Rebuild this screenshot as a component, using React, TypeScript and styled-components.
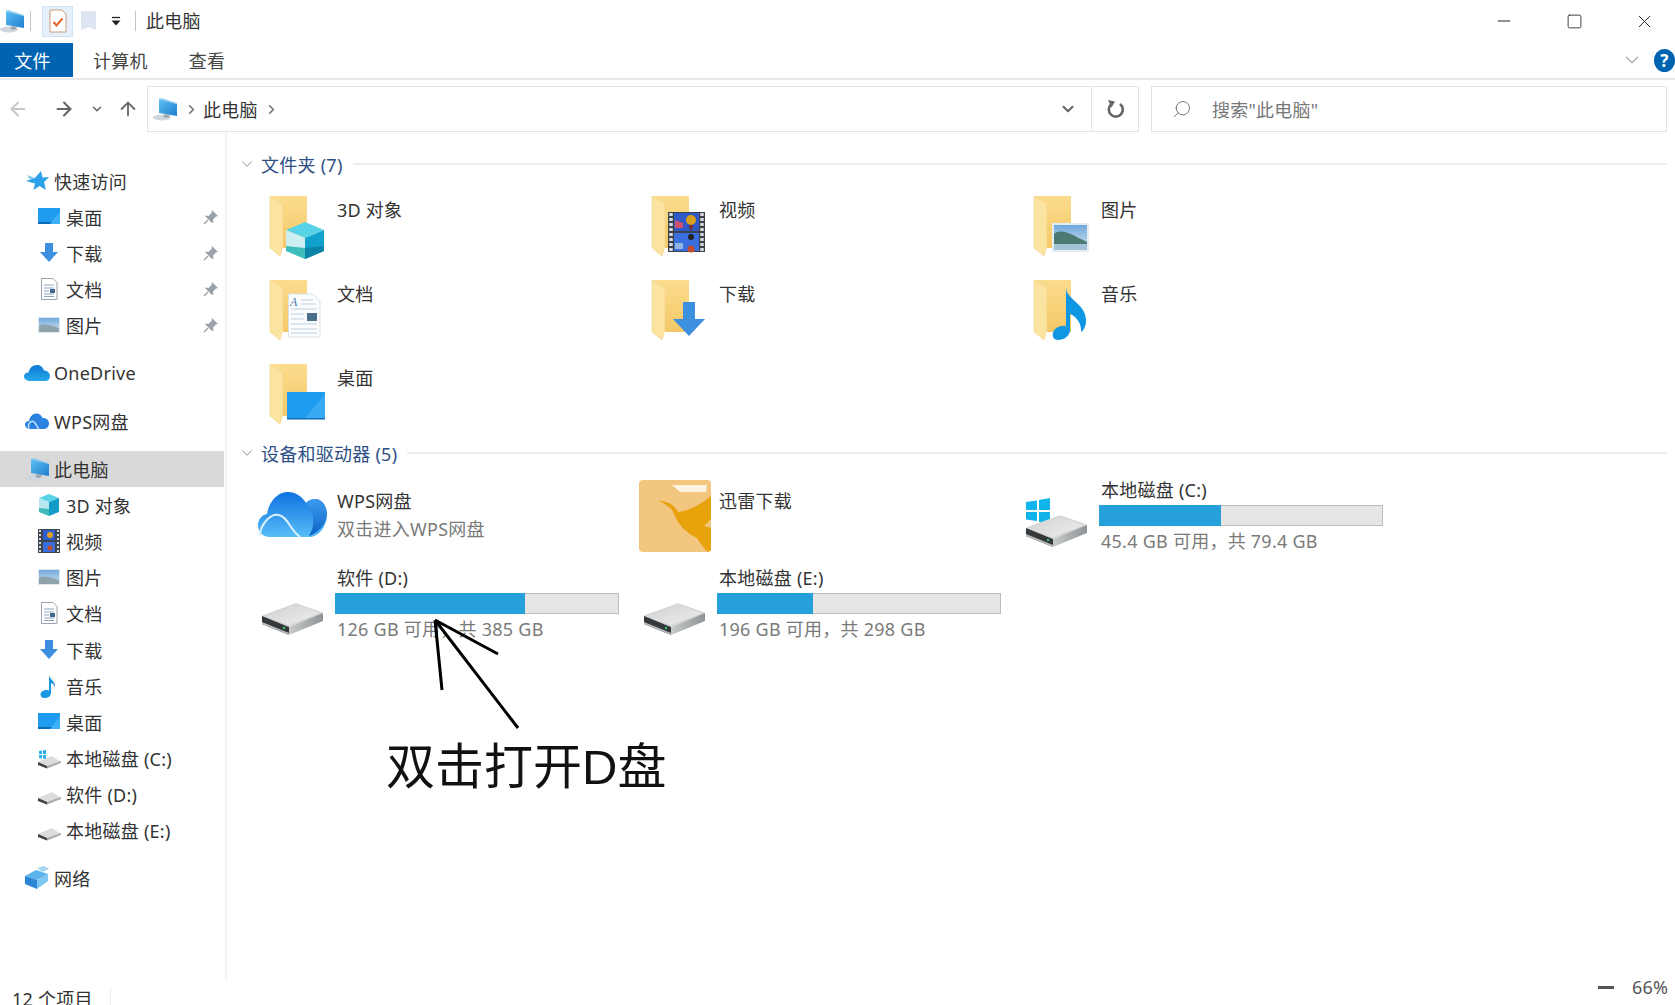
import React from 'react'
import styled, { createGlobalStyle } from 'styled-components'
import { ChevronDown, ChevronRight, ArrowLeft, ArrowRight, ArrowUp, Search, Minus, Square, X } from 'lucide-react'

const GlobalStyle = createGlobalStyle`
  html, body {
    margin: 0;
    padding: 0;
    background: #fff;
    overflow: hidden;
  }
  body {
    font-family: "Noto Sans", "Noto Sans CJK SC", sans-serif;
    font-size: 18px;
    letter-spacing: 0.25px;
    color: #333;
  }
`

const Page = styled.div`
  position: relative;
  width: 1675px;
  height: 1005px;
  display: flex;
  flex-direction: column;
  overflow: hidden;
  background: #fff;
`

const Defs = styled.svg`
  display: block;
  width: 0;
  height: 0;
`

/* title bar */
const TitleBar = styled.div`
  height: 42px;
  display: flex;
  align-items: center;
  flex-shrink: 0;
  margin-right: -4px;
`

const QuickTools = styled.div`
  display: flex;
  align-items: center;
  width: 146px;
  height: 100%;
`

const ToolSep = styled.span<{ $left: number }>`
  width: 1px;
  height: 20px;
  background: #c4c4c4;
  margin-left: ${(p) => p.$left}px;
`

const CheckTool = styled.span`
  display: flex;
  align-items: center;
  justify-content: center;
  width: 31px;
  height: 31px;
  margin-left: 11px;
  background: #e6f0fa;
  border: 1px solid #cfe3f5;
  box-sizing: border-box;
`

const TitleText = styled.span`
  flex: 1;
  font-size: 18px;
  line-height: 24px;
  color: #333;
`

const WindowButton = styled.span<{ $width: number }>`
  display: flex;
  align-items: center;
  justify-content: center;
  width: ${(p) => p.$width}px;
  color: #222;
`

/* ribbon */
const Ribbon = styled.div`
  height: 38px;
  display: flex;
  align-items: flex-start;
  border-bottom: 2px solid #e9e9e9;
  box-sizing: border-box;
  flex-shrink: 0;
  padding-top: 1px;
`

const FileTab = styled.div`
  width: 73px;
  height: 34px;
  padding-right: 8px;
  box-sizing: border-box;
  background: #0063b1;
  color: #fff;
  display: flex;
  align-items: center;
  justify-content: center;
  font-size: 18px;
`

const RibbonTab = styled.div<{ $left: number }>`
  height: 34px;
  margin-left: ${(p) => p.$left}px;
  display: flex;
  align-items: center;
  font-size: 18px;
  color: #444;
`

const RibbonEnd = styled.div`
  margin-left: auto;
  display: flex;
  align-items: center;
  height: 34px;
  gap: 11px;
  color: #a9a9a9;
`

const HelpBadge = styled.span`
  width: 21px;
  height: 23px;
  border-radius: 50%;
  background: #0063b1;
  color: #fff;
  font-size: 17px;
  font-weight: 700;
  display: flex;
  align-items: center;
  justify-content: center;
  line-height: 1;
`

/* address row */
const AddressRow = styled.div`
  height: 46px;
  margin-top: 6px;
  display: flex;
  align-items: stretch;
  flex-shrink: 0;
  padding-right: 8px;
`

const NavButtons = styled.div`
  width: 147px;
  display: flex;
  align-items: center;
  flex-shrink: 0;
`

const NavButton = styled.span<{ $left: number; $dim?: boolean }>`
  display: flex;
  margin-left: ${(p) => p.$left}px;
  color: ${(p) => (p.$dim ? '#c8c8c8' : '#666')};
`

const AddressBox = styled.div`
  flex: 1;
  display: flex;
  align-items: center;
  border: 1px solid #e3e3e3;
  box-sizing: border-box;
  font-size: 18px;
  color: #333;
`

const Crumb = styled.span`
  margin: 0 6px 0 4px;
`

const CrumbArrow = styled.span<{ $left: number }>`
  display: flex;
  margin-left: ${(p) => p.$left}px;
  color: #777;
`

const AddressEnd = styled.span`
  margin-left: auto;
  width: 46px;
  display: flex;
  align-items: center;
  justify-content: center;
  height: 100%;
  color: #666;
`

const RefreshCell = styled(AddressEnd)`
  margin-left: 0;
  border-left: 1px solid #e3e3e3;
`

const SearchBox = styled.div`
  width: 516px;
  margin-left: 12px;
  display: flex;
  align-items: center;
  border: 1px solid #e3e3e3;
  box-sizing: border-box;
  color: #777;
  font-size: 18px;
  padding-left: 20px;
  gap: 20px;
`

/* body */
const Body = styled.div`
  flex: 1;
  display: flex;
  min-height: 0;
`

const Sidebar = styled.nav`
  width: 227px;
  height: 848px;
  box-sizing: border-box;
  padding-top: 31px;
  border-right: 2px solid #f3f3f3;
  flex-shrink: 0;
`

const NavGroup = styled.div`
  margin-bottom: 11.8px;
`

const NavRow = styled.div<{ $level: number; $selected?: boolean }>`
  height: 36.1px;
  width: 224px;
  display: flex;
  align-items: center;
  box-sizing: border-box;
  padding-left: ${(p) => (p.$level === 0 ? 24 : 36)}px;
  background: ${(p) => (p.$selected ? '#d9d9d9' : 'transparent')};
  font-size: 18px;
  color: #333;
`

const NavIcon = styled.span`
  display: flex;
  align-items: center;
  justify-content: center;
  width: 26px;
  margin-right: 4px;
  flex-shrink: 0;
`

const Pin = styled.span`
  margin-left: auto;
  margin-right: 5px;
  display: flex;
`

const Main = styled.main`
  flex: 1;
  padding: 18px 8px 0 36px;
  min-width: 0;
`

const GroupHeader = styled.div<{ $after: number }>`
  height: 28px;
  display: flex;
  align-items: center;
  color: #2d4f86;
  font-size: 18px;
  margin-bottom: ${(p) => p.$after}px;
  margin-left: -25px;
  &::after {
    content: '';
    flex: 1;
    height: 2px;
    background: #ececec;
    margin-left: 10px;
  }
`

const GroupChevron = styled.span`
  display: flex;
  width: 18px;
  color: #8a8a8a;
  margin-right: 5px;
`

const FolderGrid = styled.div`
  display: grid;
  grid-template-columns: repeat(3, 382px);
  grid-auto-rows: 68px;
  row-gap: 16px;
  margin-left: -1px;
  margin-bottom: 7px;
`

const DriveGrid = styled.div`
  display: grid;
  grid-template-columns: repeat(3, 382px);
  grid-auto-rows: 88px;
  margin-left: -1px;
`

const Tile = styled.div`
  display: flex;
  align-items: flex-start;
`

const TileArt = styled.svg`
  width: 73px;
  height: 80px;
  overflow: visible;
  flex-shrink: 0;
`

const FolderLabel = styled.div`
  padding: 2px 0 0 2px;
  font-size: 18px;
  line-height: 24px;
  color: #333;
`

const DriveInfo = styled.div<{ $top?: number }>`
  padding-top: ${(p) => p.$top ?? 0}px;
  width: 284px;
`

const DriveName = styled.div`
  padding-left: 2px;
  font-size: 18px;
  line-height: 24px;
  color: #333;
`

const DriveSub = styled.div<{ $top: number }>`
  padding-left: 2px;
  margin-top: ${(p) => p.$top}px;
  font-size: 18px;
  line-height: 24px;
  color: #7a7a7a;
  white-space: nowrap;
`

const Bar = styled.div`
  height: 21px;
  margin-top: 3px;
  background: #e6e6e6;
  box-shadow: inset 0 0 0 1px #bcbcbc;
`

const BarFill = styled.div`
  height: 100%;
  background: #26a0da;
`

/* status + overlays */
const StatusBar = styled.div`
  position: absolute;
  left: 12px;
  bottom: -6px;
  height: 24px;
  line-height: 24px;
  font-size: 18px;
  color: #333;
  display: flex;
  &::after {
    content: '';
    width: 1px;
    height: 24px;
    background: #eee;
    margin-left: 17px;
  }
`

const ZoomBadge = styled.div`
  position: absolute;
  left: 1598px;
  top: 975px;
  display: flex;
  align-items: center;
  height: 24px;
  gap: 18px;
  color: #555;
  font-size: 18px;
`

const ZoomMinus = styled.span`
  width: 16px;
  height: 3px;
  background: #555;
`

const ArrowMark = styled.svg`
  position: absolute;
  left: 430px;
  top: 615px;
  width: 100px;
  height: 120px;
`

const Annotation = styled.div`
  position: absolute;
  left: 386px;
  top: 731px;
  font-size: 49px;
  line-height: 72px;
  letter-spacing: 0;
  color: #111;
  font-family: "Liberation Sans", "Noto Sans CJK SC", sans-serif;
  white-space: nowrap;
`

/* drawings */
const Pc = ({ size = 24 }: { size?: number }) => (
  <svg width={size} height={size} viewBox="0 0 24 24">
    <ellipse cx="9" cy="20.5" rx="9" ry="3" fill="#cfd6dc" />
    <polygon points="6,2 24,7 24,19 6,16" fill="url(#pcScreen)" />
    <polygon points="6,2 8,1 24,6 24,7" fill="#8cc8ee" />
    <polygon points="12,17 17,18 15,21 10,20" fill="#9aa6b0" />
  </svg>
)

const Star = () => (
  <svg width="24" height="24" viewBox="0 0 24 24">
    <polygon points="16,2 17.500,8.500 24,8 19,13 21,21 14.500,17 8.500,21 10,14.500 1,12 10,9" fill="#2ba1e8" />
    <polygon points="2,6 10,9 5,10.500" fill="#7cc7f2" />
  </svg>
)

const DesktopSmall = () => (
  <svg width="22" height="18" viewBox="0 0 22 18">
    <rect width="22" height="16" fill="#1f9bf0" />
    <rect y="14" width="22" height="2" fill="#0b6cb5" />
    <polygon points="12,16 22,4 22,16" fill="#3fb0f7" />
  </svg>
)

const DownSmall = () => (
  <svg width="20" height="20" viewBox="0 0 20 20">
    <polygon points="6,0 14,0 14,9 19,9 10,19 1,9 6,9" fill="#3d8fe0" />
  </svg>
)

const DocSmall = () => (
  <svg width="18" height="22" viewBox="0 0 18 22">
    <path d="M1.5 .5H13L17 4.500V21.500H1.500Z" fill="#fff" stroke="#9aa3ad" />
    <path d="M4 7h10M4 10h10M4 13h5M4 16h10M4 18.500h10" stroke="#8fa6bf" />
    <rect x="10" y="11" width="5" height="4" fill="#41688f" />
  </svg>
)

const PicSmall = () => (
  <svg width="22" height="16" viewBox="0 0 22 16">
    <rect width="22" height="16" fill="#dfe7ef" />
    <rect x="1" y="1" width="20" height="14" fill="url(#picSky)" />
    <path d="M1 9C6 6 12 8 21 11V15H1Z" fill="#8fa3ad" />
  </svg>
)

const Cloud = () => (
  <svg width="26" height="18" viewBox="0 0 26 18">
    <path d="M6 17C2 17 0 14.500 0 12.500C0 10 2 8.500 4.500 8.500C5.500 4 8.500 1 13 1C17 1 19 3.500 20 6.500C23.500 6.500 26 9 26 12C26 15 24 17 21 17Z" fill="url(#oneDrive)" />
  </svg>
)

const WpsSmall = () => (
  <svg width="24" height="18" viewBox="0 0 24 18">
    <path d="M5 17C2 17 0 15 0 12.500C0 10.500 2 9 4 9C5 4 8 1.500 11.500 1.500C14.500 1.500 16.500 3.500 17.500 6C21 5.500 24 8 24 11.500C24 15 21.500 17 18.500 17Z" fill="#2a83e0" />
    <path d="M4 17C2 13 5 8.500 8.500 9.500C11 10.500 11 14 14 17" fill="none" stroke="#bfe0fa" strokeWidth="1.500" />
  </svg>
)

const CubeSmall = () => (
  <svg width="24" height="24" viewBox="0 0 24 24">
    <polygon points="12,1 22,5 12,9 2,5" fill="#58d2e6" />
    <polygon points="2,5 12,9 12,23 2,19" fill="#b7e8ef" />
    <polygon points="22,5 12,9 12,23 22,19" fill="#149cc9" />
    <polygon points="2,15 12,16 12,23 2,19" fill="#3fb9b9" />
  </svg>
)

const FilmSmall = () => (
  <svg width="22" height="24" viewBox="0 0 22 24">
    <rect width="22" height="24" fill="#3f4650" />
    <path d="M2 1v22M20 1v22" stroke="#d8dde0" strokeWidth="2" strokeDasharray="2 2" />
    <rect x="5" y="1" width="12" height="10" fill="#2f5fcf" />
    <rect x="5" y="13" width="12" height="10" fill="#3a6fe0" />
    <circle cx="12" cy="6" r="3" fill="#e0a020" />
    <circle cx="12" cy="19" r="2.500" fill="#c24b2c" />
  </svg>
)

const NoteSmall = () => (
  <svg width="20" height="24" viewBox="0 0 20 24">
    <path d="M10 1C11 6 17 7 16 14C15.500 11 13.500 9.500 12 9V19C12 22 9 24 5.500 24C3 24 1.500 22.500 1.500 20.500C1.500 18 4.500 16 7.500 16C8.500 16 9.500 16.300 10 16.500Z" fill="#1a97e2" />
  </svg>
)

const DriveSmall = ({ win }: { win?: boolean }) => (
  <svg width="24" height="22" viewBox="0 0 24 22">
    <polygon points="1,15 15,9 24,15 10,21" fill="#dcdcdc" />
    <polygon points="1,15 10,19 10,21.500 1,18" fill="#3d4144" />
    <polygon points="10,19 24,14 24,16 10,21.500" fill="#a9acae" />
    {win && <path d="M2 4l3-.5V7H2zM6 3.300 9 3V7H6zM2 8h3v3.500l-3-.5zM6 8h3v4l-3-.5z" fill="#28b3e8" />}
  </svg>
)

const NetworkSmall = () => (
  <svg width="26" height="24" viewBox="0 0 26 24">
    <polygon points="1,10 12,4 24,8 13,14" fill="#5db3ec" />
    <polygon points="1,10 13,14 13,23 1,18" fill="#2a86d4" />
    <polygon points="13,14 24,8 24,15 13,23" fill="#7ec6f2" />
    <polygon points="13,2 20,0 25,3 18,6" fill="#a5d7f5" />
  </svg>
)

const PinIcon = () => (
  <svg width="16" height="16" viewBox="0 0 16 16">
    <path d="M9 1l6 6-2 .5-3 3 .5 3L9 14 2 7l.500-.5 3 .5 3-3z" fill="#9aa1a8" />
    <path d="M5 11l-4 4" stroke="#9aa1a8" strokeWidth="1.500" />
  </svg>
)

const RefreshIcon = () => (
  <svg width="20" height="22" viewBox="0 0 20 22">
    <path d="M6 6.500A7 7 0 1 0 15 6" fill="none" stroke="#666" strokeWidth="2.600" />
    <polygon points="3,2 10,3.500 6.500,9.500" fill="#666" />
  </svg>
)

const Folder = () => (
  <g>
    <polygon points="8,0 45,0 45,52 21,52" fill="url(#folderBack)" />
    <polygon points="8,0 21,8 21,50 18,60 8,52" fill="#fbe3a0" />
    <polygon points="8,0 21,8 21,50 18,60 8,52" fill="none" stroke="#f3d58a" strokeWidth=".6" />
  </g>
)

type ArtName = 'cube' | 'film' | 'picture' | 'doc' | 'down' | 'music' | 'desktop'

const overlays: Record<ArtName, React.ReactNode> = {
  cube: (
    <g>
      <polygon points="43,26 62,34 43,42 24,34" fill="#58d2e6" />
      <polygon points="24,34 43,42 43,63 24,55" fill="#cdeff2" />
      <polygon points="62,34 43,42 43,63 62,55" fill="#12a0cc" />
      <polygon points="24,50 43,52 43,63 24,55" fill="#3fbcbc" />
      <polygon points="62,50 43,52 43,63 62,55" fill="#0c83a8" />
    </g>
  ),
  film: (
    <g>
      <rect x="24" y="16" width="37" height="40" fill="#3a4149" />
      <path d="M27 17v38M58 17v38" stroke="#d5dade" strokeWidth="3.500" strokeDasharray="3 2" />
      <rect x="30" y="17" width="25" height="18" fill="#2e59c6" />
      <rect x="30" y="37" width="25" height="18" fill="#3a6fe0" />
      <circle cx="47" cy="24" r="5" fill="#d9a01f" />
      <path d="M45 29h4l-1 5h-2z" fill="#7a2f1c" />
      <path d="M31 24l8 3v5h-8z" fill="#cf4f6f" />
      <circle cx="47" cy="41" r="3" fill="#222" />
      <circle cx="47" cy="53" r="3.500" fill="#c24b2c" />
      <path d="M31 47h8v6h-8z" fill="#8fb4df" />
    </g>
  ),
  picture: (
    <g>
      <rect x="26" y="27" width="37" height="29" fill="#e4edf5" />
      <rect x="28" y="29" width="33" height="25" fill="url(#picSky)" />
      <path d="M28 38C36 32 44 38 61 46V54H28Z" fill="#4b7a72" />
      <rect x="28" y="48" width="33" height="6" fill="#a4c2d8" />
    </g>
  ),
  doc: (
    <g>
      <path d="M26.500 14H51L58 21V57H26.500Z" fill="#fbfcfd" stroke="#dce1e6" />
      <path d="M39 20h12M39 24h15M29 29h26M29 34h13M29 39h13M29 44h26M29 49h26M29 53h26" stroke="#bcd0e2" />
      <text x="28" y="26" fontSize="12" fontStyle="italic" fontFamily="Liberation Serif, serif" fill="#4575a8">A</text>
      <rect x="45" y="33" width="10" height="8" fill="#4d7089" />
    </g>
  ),
  down: (
    <g>
      <polygon points="39,22 51,22 51,39 61,39 45,56 29,39 39,39" fill="#3d8fe0" />
    </g>
  ),
  music: (
    <g>
      <path d="M40 8C41 20 60 24 60 40C60 46 58 50 55 52C56 44 50 36 44 34V50C44 56 38 60 32 60C28 60 26 57 27 53C28 48 34 45 40 46Z" fill="#0f97e4" />
    </g>
  ),
  desktop: (
    <g>
      <rect x="25" y="28" width="38" height="27" fill="#1f9bf0" />
      <polygon points="42,55 63,30 63,55" fill="#37a9f5" />
      <rect x="25" y="54" width="38" height="1.500" fill="#0f6db3" />
    </g>
  ),
}

const FolderArt = ({ name }: { name: ArtName }) => (
  <TileArt viewBox="0 0 73 80">
    <Folder />
    {overlays[name]}
  </TileArt>
)

const DriveBody = () => (
  <g strokeLinejoin="round">
    <polygon points="1,50 34,38 60,47 27,60" fill="url(#driveTop)" stroke="#d6d6d6" strokeWidth="1.500" />
    <polygon points="0,50 27,61 27,69 0,58" fill="#34383b" />
    <polygon points="27,61 61,47 61,55 27,69" fill="url(#driveSide)" />
    <polygon points="0,56 27,67 27,69 0,58" fill="#b9bcbe" />
    <circle cx="22" cy="62" r="1.200" fill="#35c46b" />
  </g>
)

const DriveArt = ({ win }: { win?: boolean }) => (
  <TileArt viewBox="0 0 73 80">
    {win && <path d="M0 24l11-1.500V32H0zM13 22 24 20V32H13zM0 34h11v9L0 41.500zM13 34h11v12l-11-2z" fill="#10b4ea" />}
    <DriveBody />
  </TileArt>
)

const WpsArt = () => (
  <TileArt viewBox="0 0 73 80">
    <path d="M8 59C-1 59 -4 52 -4 47C-4 41 0 37 5 36C7 23 16 14 26 14C35 14 41 20 44 25C47 22 50 21 53 21C60 21 65 28 65 36C65 49 56 59 48 59Z" fill="url(#wpsCloud)" />
    <path d="M44 25C52 35 54 46 47 58C54 56 64 48 65 36C64 28 59 21 53 21C49 21 46 23 44 25Z" fill="url(#wpsRight)" />
    <path d="M-2 58C-2 46 9 35 17 37C26 39 28 52 38 59" fill="none" stroke="#d9f0fd" strokeWidth="2" />
  </TileArt>
)

const XunleiArt = () => (
  <TileArt viewBox="0 0 73 80">
    <rect x="-5" y="2" width="72" height="72" rx="4" fill="#f3c67f" />
    <polygon points="28,7 63,7 62,14 36,14" fill="#fdf3e0" />
    <path d="M14 22L25 25Q31 28 34 34Q50 32 67 18L67 41L60 48L67 50L67 72L64 74Q59 70 53 60Q36 52 30 36Q27 29 22 27Z" fill="#e8a20c" />
  </TileArt>
)

type NavEntry = { label: string; icon: React.ReactNode; pin?: boolean }

const quickAccess: NavEntry[] = [
  { label: '桌面', icon: <DesktopSmall />, pin: true },
  { label: '下载', icon: <DownSmall />, pin: true },
  { label: '文档', icon: <DocSmall />, pin: true },
  { label: '图片', icon: <PicSmall />, pin: true },
]

const pcEntries: NavEntry[] = [
  { label: '3D 对象', icon: <CubeSmall /> },
  { label: '视频', icon: <FilmSmall /> },
  { label: '图片', icon: <PicSmall /> },
  { label: '文档', icon: <DocSmall /> },
  { label: '下载', icon: <DownSmall /> },
  { label: '音乐', icon: <NoteSmall /> },
  { label: '桌面', icon: <DesktopSmall /> },
  { label: '本地磁盘 (C:)', icon: <DriveSmall win /> },
  { label: '软件 (D:)', icon: <DriveSmall /> },
  { label: '本地磁盘 (E:)', icon: <DriveSmall /> },
]

const folders: { label: string; art: ArtName }[] = [
  { label: '3D 对象', art: 'cube' },
  { label: '视频', art: 'film' },
  { label: '图片', art: 'picture' },
  { label: '文档', art: 'doc' },
  { label: '下载', art: 'down' },
  { label: '音乐', art: 'music' },
  { label: '桌面', art: 'desktop' },
]

const SubRow = ({ entry }: { entry: NavEntry }) => (
  <NavRow $level={1}>
    <NavIcon>{entry.icon}</NavIcon>
    {entry.label}
    {entry.pin && (
      <Pin>
        <PinIcon />
      </Pin>
    )}
  </NavRow>
)

const DriveTile = (props: { name: string; used: number; sub: string; win?: boolean }) => (
  <Tile>
    <DriveArt win={props.win} />
    <DriveInfo>
      <DriveName>{props.name}</DriveName>
      <Bar>
        <BarFill style={{ width: props.used }} />
      </Bar>
      <DriveSub $top={3}>{props.sub}</DriveSub>
    </DriveInfo>
  </Tile>
)

export default function App() {
  return (
    <Page>
      <GlobalStyle />
      <Defs>
        <defs>
          <linearGradient id="pcScreen" x1="0" y1="0" x2="1" y2="1">
            <stop offset="0" stopColor="#5cc0f2" />
            <stop offset="1" stopColor="#1f7fd0" />
          </linearGradient>
          <linearGradient id="picSky" x1="0" y1="0" x2="0" y2="1">
            <stop offset="0" stopColor="#6fa8dc" />
            <stop offset="1" stopColor="#d8e6f0" />
          </linearGradient>
          <linearGradient id="oneDrive" x1="0" y1="0" x2="0" y2="1">
            <stop offset="0" stopColor="#0f78d4" />
            <stop offset="1" stopColor="#28a8ea" />
          </linearGradient>
          <linearGradient id="folderBack" x1="0" y1="0" x2="0" y2="1">
            <stop offset="0" stopColor="#fbdc8e" />
            <stop offset="1" stopColor="#f4c866" />
          </linearGradient>
          <linearGradient id="driveTop" x1="0" y1="0" x2="1" y2="1">
            <stop offset="0" stopColor="#d0d0d0" />
            <stop offset="1" stopColor="#f0f0f0" />
          </linearGradient>
          <linearGradient id="driveSide" x1="0" y1="0" x2="1" y2="0">
            <stop offset="0" stopColor="#c8cacb" />
            <stop offset="1" stopColor="#8f9395" />
          </linearGradient>
          <linearGradient id="wpsCloud" x1="0" y1="0" x2="0" y2="1">
            <stop offset="0" stopColor="#0d72e0" />
            <stop offset="1" stopColor="#58bdf8" />
          </linearGradient>
          <linearGradient id="wpsRight" x1="0" y1="0" x2="0" y2="1">
            <stop offset="0" stopColor="#3d9cf0" />
            <stop offset="1" stopColor="#0c62c4" />
          </linearGradient>
        </defs>
      </Defs>

      <TitleBar>
        <QuickTools>
          <Pc />
          <ToolSep $left={6} />
          <CheckTool>
            <svg width="18" height="24" viewBox="0 0 18 24">
              <path d="M1 1H13L17 5V23H1Z" fill="#fff" stroke="#c99b7a" />
              <path d="M4.500 13l3 3.500 6-7" fill="none" stroke="#e2622a" strokeWidth="2" />
            </svg>
          </CheckTool>
          <svg width="16" height="22" viewBox="0 0 16 22" style={{ marginLeft: 8 }}>
            <path d="M0 1H15V20L8 17 0 20Z" fill="#dde5f2" />
          </svg>
          <svg width="12" height="12" viewBox="0 0 12 12" style={{ marginLeft: 13 }}>
            <path d="M2 2.500h8" stroke="#222" strokeWidth="1.300" />
            <path d="M1.500 5.500h9L6 10.500z" fill="#222" />
          </svg>
          <ToolSep $left={13} />
        </QuickTools>
        <TitleText>此电脑</TitleText>
        <WindowButton $width={70}>
          <Minus size={20} strokeWidth={1.2} />
        </WindowButton>
        <WindowButton $width={70}>
          <Square size={17} strokeWidth={1.2} />
        </WindowButton>
        <WindowButton $width={70}>
          <X size={21} strokeWidth={1.1} />
        </WindowButton>
      </TitleBar>

      <Ribbon>
        <FileTab>文件</FileTab>
        <RibbonTab $left={20}>计算机</RibbonTab>
        <RibbonTab $left={41}>查看</RibbonTab>
        <RibbonEnd>
          <ChevronDown size={22} strokeWidth={1.2} />
          <HelpBadge>?</HelpBadge>
        </RibbonEnd>
      </Ribbon>

      <AddressRow>
        <NavButtons>
          <NavButton $left={7} $dim>
            <ArrowLeft size={22} strokeWidth={2.3} />
          </NavButton>
          <NavButton $left={24}>
            <ArrowRight size={22} strokeWidth={2.3} />
          </NavButton>
          <NavButton $left={15}>
            <ChevronDown size={14} strokeWidth={2.6} />
          </NavButton>
          <NavButton $left={13}>
            <ArrowUp size={22} strokeWidth={2} />
          </NavButton>
        </NavButtons>
        <AddressBox>
          <CrumbArrow $left={5}>
            <Pc />
          </CrumbArrow>
          <CrumbArrow $left={7}>
            <ChevronRight size={15} strokeWidth={2.8} />
          </CrumbArrow>
          <Crumb>此电脑</Crumb>
          <CrumbArrow $left={0}>
            <ChevronRight size={15} strokeWidth={2.8} />
          </CrumbArrow>
          <AddressEnd>
            <ChevronDown size={18} strokeWidth={2.8} />
          </AddressEnd>
          <RefreshCell>
            <RefreshIcon />
          </RefreshCell>
        </AddressBox>
        <SearchBox>
          <Search size={20} strokeWidth={1.2} style={{ transform: 'scaleX(-1)' }} />
          搜索"此电脑"
        </SearchBox>
      </AddressRow>

      <Body>
        <Sidebar>
          <NavGroup>
            <NavRow $level={0}>
              <NavIcon>
                <Star />
              </NavIcon>
              快速访问
            </NavRow>
            {quickAccess.map((entry) => (
              <SubRow key={entry.label} entry={entry} />
            ))}
          </NavGroup>
          <NavGroup>
            <NavRow $level={0}>
              <NavIcon>
                <Cloud />
              </NavIcon>
              OneDrive
            </NavRow>
          </NavGroup>
          <NavGroup>
            <NavRow $level={0}>
              <NavIcon>
                <WpsSmall />
              </NavIcon>
              WPS网盘
            </NavRow>
          </NavGroup>
          <NavGroup>
            <NavRow $level={0} $selected>
              <NavIcon>
                <Pc />
              </NavIcon>
              此电脑
            </NavRow>
            {pcEntries.map((entry) => (
              <SubRow key={entry.label} entry={entry} />
            ))}
          </NavGroup>
          <NavRow $level={0}>
            <NavIcon>
              <NetworkSmall />
            </NavIcon>
            网络
          </NavRow>
        </Sidebar>

        <Main>
          <GroupHeader $after={18}>
            <GroupChevron>
              <ChevronDown size={18} strokeWidth={1.3} />
            </GroupChevron>
            文件夹 (7)
          </GroupHeader>
          <FolderGrid>
            {folders.map((folder) => (
              <Tile key={folder.label}>
                <FolderArt name={folder.art} />
                <FolderLabel>{folder.label}</FolderLabel>
              </Tile>
            ))}
          </FolderGrid>

          <GroupHeader $after={11}>
            <GroupChevron>
              <ChevronDown size={18} strokeWidth={1.3} />
            </GroupChevron>
            设备和驱动器 (5)
          </GroupHeader>
          <DriveGrid>
            <Tile>
              <WpsArt />
              <DriveInfo $top={11}>
                <DriveName>WPS网盘</DriveName>
                <DriveSub $top={4}>双击进入WPS网盘</DriveSub>
              </DriveInfo>
            </Tile>
            <Tile>
              <XunleiArt />
              <DriveInfo $top={11}>
                <DriveName>迅雷下载</DriveName>
              </DriveInfo>
            </Tile>
            <DriveTile name="本地磁盘 (C:)" used={122} sub="45.4 GB 可用，共 79.4 GB" win />
            <DriveTile name="软件 (D:)" used={190} sub="126 GB 可用，共 385 GB" />
            <DriveTile name="本地磁盘 (E:)" used={96} sub="196 GB 可用，共 298 GB" />
          </DriveGrid>
        </Main>
      </Body>

      <StatusBar>12 个项目</StatusBar>
      <ZoomBadge>
        <ZoomMinus />
        66%
      </ZoomBadge>
      <ArrowMark viewBox="0 0 100 120">
        <path d="M5 5L12 75M5 5L88 113M5 5L68 39" stroke="#000" strokeWidth="3" fill="none" />
      </ArrowMark>
      <Annotation>双击打开D盘</Annotation>
    </Page>
  )
}
